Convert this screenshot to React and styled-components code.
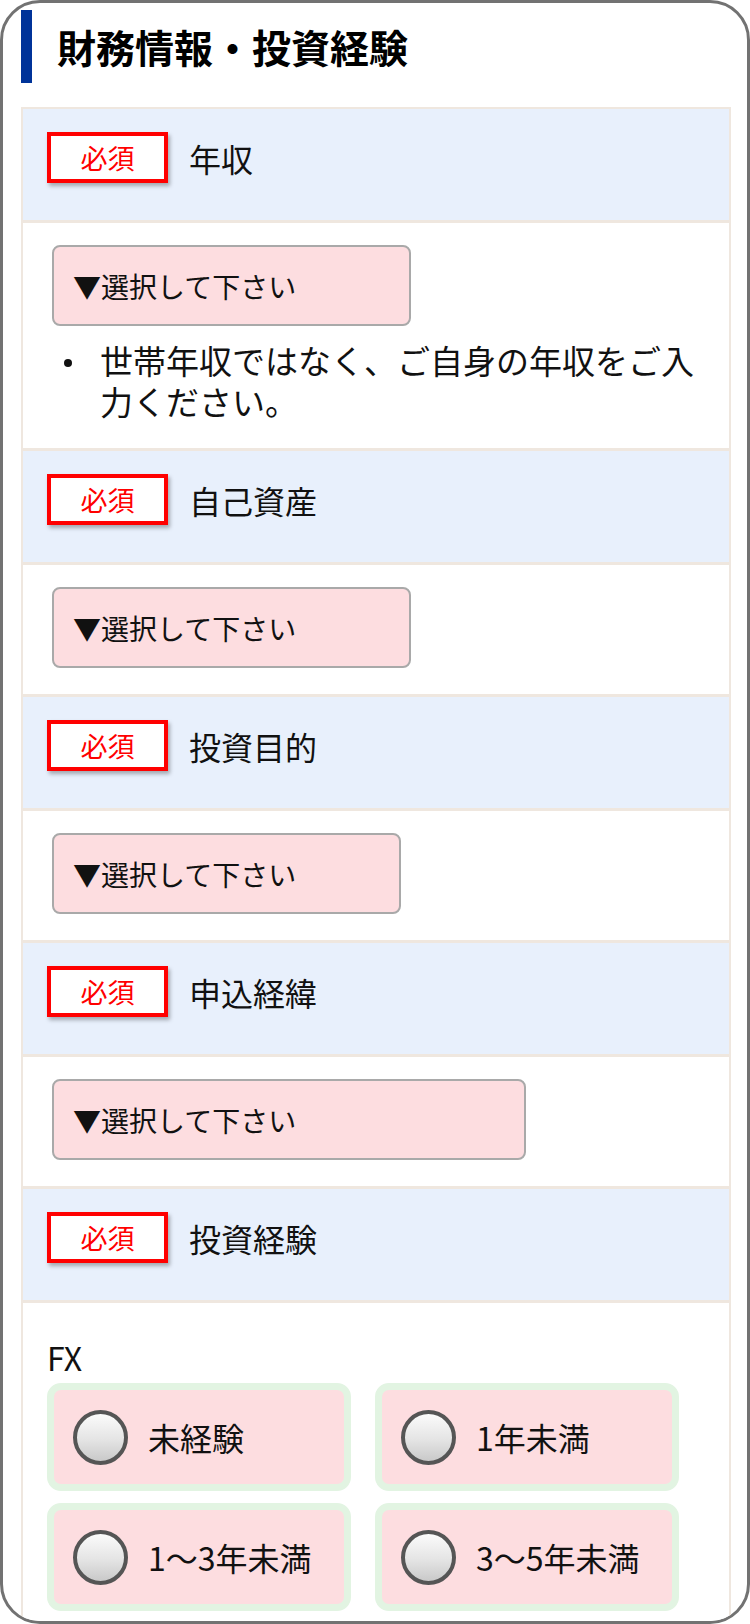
import React from 'react'
import styled, { createGlobalStyle } from 'styled-components'

const GlobalStyle = createGlobalStyle`
  html, body {
    margin: 0;
    padding: 0;
    background: #ffffff;
  }
  body {
    font-family: "Noto Sans CJK JP", "Noto Sans", "Liberation Sans", sans-serif;
    color: #111111;
  }
  * {
    box-sizing: border-box;
  }
`

const Frame = styled.div`
  width: 750px;
  height: 1624px;
  border: 3px solid #727272;
  border-radius: 40px;
  overflow: hidden;
  padding: 7px 16px 0 18px;
  background: #ffffff;
`

const Title = styled.h1`
  margin: 0 0 24px;
  height: 73px;
  display: flex;
  align-items: center;
  border-left: 11px solid #003399;
  padding-left: 25px;
  font-size: 39px;
  font-weight: 700;
  line-height: 1;
  color: #000000;
`

const Table = styled.div`
  border: 2px solid #efe7df;
  border-bottom: none;
  display: flex;
  flex-direction: column;
`

const HeadRow = styled.div`
  height: 114px;
  background: #e8f0fc;
  border-bottom: 3px solid #efe7df;
  padding: 23px 24px 0;
  display: flex;
  align-items: flex-start;
`

const HeadInner = styled.div`
  display: flex;
  align-items: center;
  gap: 21px;
`

const Badge = styled.span`
  width: 121px;
  height: 51px;
  border: 4px solid #ff0000;
  background: #ffffff;
  color: #ff0000;
  font-size: 27px;
  display: flex;
  align-items: center;
  justify-content: center;
  box-shadow: 2px 3px 4px rgba(0, 0, 0, 0.3);
`

const Label = styled.span`
  font-size: 32px;
  line-height: 1;
  color: #111111;
`

const BodyRow = styled.div`
  background: #ffffff;
  border-bottom: 3px solid #efe7df;
  padding: ${(p) => (p.$loose ? '33px 24px 40px' : '22px 24px 26px 29px')};
  display: flex;
  flex-direction: column;
  align-items: flex-start;
`

const Select = styled.div`
  width: ${(p) => p.$w}px;
  height: 81px;
  border: 2px solid #a9a9a9;
  border-radius: 8px;
  background: #fddde0;
  padding-left: 19px;
  display: flex;
  align-items: center;
  font-size: 28px;
  color: #111111;
`

const Notes = styled.ul`
  list-style: none;
  margin: 14px 0 0;
  padding: 0;
`

const Note = styled.li`
  display: flex;
  align-items: flex-start;
  font-size: 33px;
  line-height: 41px;
`

const Dot = styled.span`
  flex: none;
  width: 8px;
  height: 8px;
  border-radius: 50%;
  background: #111111;
  margin: 19px 28px 0 12px;
`

const SubLabel = styled.div`
  font-size: 32px;
  line-height: 42px;
  margin-bottom: 5px;
`

const Choices = styled.div`
  display: grid;
  grid-template-columns: 304px 304px;
  column-gap: 24px;
  row-gap: 12px;
`

const Choice = styled.label`
  height: 108px;
  border: 7px solid #e2f4e2;
  border-radius: 14px;
  background: #fddde0;
  padding-left: 19px;
  display: flex;
  align-items: center;
  gap: 20px;
  font-size: 32px;
  color: #111111;
`

const Radio = styled.span`
  flex: none;
  width: 55px;
  height: 55px;
  border-radius: 50%;
  border: 4px solid #555555;
  background: linear-gradient(180deg, #fbfbfb 0%, #e4e4e4 55%, #c9c9c9 100%);
`

const selects = [
  { label: '年収', width: 359, note: '世帯年収ではなく、ご自身の年収をご入力ください。' },
  { label: '自己資産', width: 359 },
  { label: '投資目的', width: 349 },
  { label: '申込経緯', width: 474 },
]

const fxOptions = ['未経験', '1年未満', '1〜3年未満', '3〜5年未満']

const Head = ({ children }) => (
  <HeadRow>
    <HeadInner>
      <Badge>必須</Badge>
      <Label>{children}</Label>
    </HeadInner>
  </HeadRow>
)

export default function App() {
  return (
    <>
      <GlobalStyle />
      <Frame>
        <Title>財務情報・投資経験</Title>
        <Table>
          {selects.map((s) => (
            <React.Fragment key={s.label}>
              <Head>{s.label}</Head>
              <BodyRow>
                <Select $w={s.width}>▼選択して下さい</Select>
                {s.note && (
                  <Notes>
                    <Note>
                      <Dot />
                      <span>{s.note}</span>
                    </Note>
                  </Notes>
                )}
              </BodyRow>
            </React.Fragment>
          ))}
          <Head>投資経験</Head>
          <BodyRow $loose>
            <SubLabel>FX</SubLabel>
            <Choices>
              {fxOptions.map((o) => (
                <Choice key={o}>
                  <Radio />
                  <span>{o}</span>
                </Choice>
              ))}
            </Choices>
          </BodyRow>
        </Table>
      </Frame>
    </>
  )
}
